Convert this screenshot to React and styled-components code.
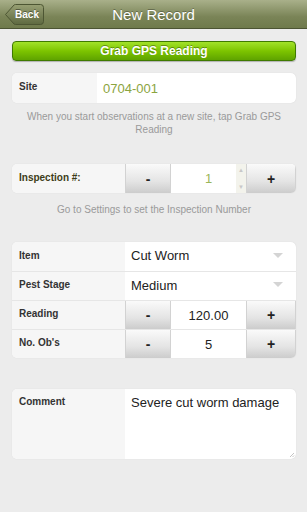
import React from 'react'
import styled, { createGlobalStyle } from 'styled-components'

const GlobalStyle = createGlobalStyle`
    html, body {
        margin: 0;
        padding: 0;
        background: #ececec;
        font-family: 'Liberation Sans', Arial, sans-serif;
    }
`

const Page = styled.div`
    width: 307px;
    height: 512px;
    background: #ececec;
    overflow: hidden;
`

const Header = styled.div`
    position: relative;
    height: 29px;
    display: flex;
    align-items: center;
    justify-content: center;
    background: linear-gradient(#a9b08a, #7a8457 60%, #6f7a4c);
    border-bottom: 1px solid #4c5433;
    box-sizing: border-box;

    h1 {
        margin: 0;
        font-size: 15px;
        font-weight: 400;
        color: #fff;
        text-shadow: 0 -1px 0 rgba(0, 0, 0, 0.3);
    }
`

const BackButton = styled.div`
    position: absolute;
    left: 5px;
    top: 4px;
    height: 21px;
    width: 39px;
    display: flex;
    align-items: center;
    justify-content: center;
    padding-left: 5px;
    box-sizing: border-box;
    font-size: 10px;
    font-weight: 700;
    color: #fff;
    text-shadow: 0 -1px 0 rgba(0, 0, 0, 0.4);

    svg {
        position: absolute;
        left: 0;
        top: 0;
        z-index: 0;
    }

    span {
        position: relative;
    }
`

const Content = styled.div`
    padding: 12px 11px 0 12px;
    display: flex;
    flex-direction: column;
`

const GpsButton = styled.div`
    height: 20px;
    display: flex;
    align-items: center;
    justify-content: center;
    border: 1px solid #3f7a00;
    border-radius: 4px;
    background: linear-gradient(#a2e22a, #7dc400 50%, #5ea300);
    box-shadow: 0 1px 1px rgba(0, 0, 0, 0.25);
    font-size: 12px;
    font-weight: 700;
    color: #fff;
    text-shadow: 0 -1px 0 rgba(0, 0, 0, 0.35);
    box-sizing: border-box;
`

const Card = styled.div`
    margin-top: ${(p) => p.$top || 0}px;
    background: #fff;
    border-radius: 5px;
    box-shadow: 0 0 1px rgba(0, 0, 0, 0.15);
    overflow: hidden;
`

const Row = styled.div`
    display: grid;
    grid-template-columns: ${(p) => p.$labelWidth || 113}px 1fr;
    height: ${(p) => p.$height || 29}px;
    border-top: ${(p) => (p.$first ? 'none' : '1px solid #e6e6e6')};
    box-sizing: border-box;
`

const Label = styled.div`
    background: #f6f6f6;
    padding: ${(p) => (p.$top ? '7px' : '0')} 0 0 7px;
    display: flex;
    align-items: ${(p) => (p.$top ? 'flex-start' : 'center')};
    font-size: 10px;
    font-weight: 700;
    color: ${(p) => p.$color || '#333'};
    padding-bottom: ${(p) => (p.$top ? '0' : '3px')};
`

const Value = styled.div`
    display: flex;
    align-items: ${(p) => (p.$top ? 'flex-start' : 'center')};
    padding: ${(p) => (p.$top ? '5px' : '0')} 10px 0 6px;
    font-size: 13px;
    color: ${(p) => p.$color || '#222'};
    position: relative;
`

const Select = styled(Value)`
    justify-content: space-between;
    padding-bottom: 2px;

    svg {
        margin-right: 3px;
    }
`

const Stepper = styled.div`
    display: grid;
    grid-template-columns: 46px 1fr 50px;
`

const StepButton = styled.div`
    display: flex;
    align-items: center;
    justify-content: center;
    background: linear-gradient(#fafafa, #e4e4e4 60%, #cccccc);
    border-left: 1px solid #d2d2d2;
    border-right: 1px solid #d2d2d2;
    font-size: 14px;
    font-weight: 700;
    color: #222;
`

const StepValue = styled.div`
    display: flex;
    align-items: center;
    justify-content: center;
    font-size: 13px;
    color: ${(p) => p.$color || '#222'};
    position: relative;
`

const Spinner = styled.div`
    position: absolute;
    right: 0;
    top: 0;
    bottom: 0;
    width: 10px;
    background: #f3f3ec;
    display: flex;
    flex-direction: column;
    justify-content: space-between;
    align-items: center;
    padding: 3px 0;
    box-sizing: border-box;
    font-size: 6px;
    color: #c8c8c8;
`

const Hint = styled.div`
    margin-top: ${(p) => p.$top || 8}px;
    padding: 0 14px;
    text-align: center;
    font-size: 10px;
    line-height: 13px;
    color: #9a9a9a;
`

const CommentValue = styled.div`
    padding: 6px 6px 0 6px;
    font-size: 13px;
    color: #222;
    position: relative;

    svg {
        position: absolute;
        right: 1px;
        bottom: 1px;
    }
`

const Arrow = () => (
    <svg width="10" height="6" viewBox="0 0 10 6">
        <path d="M0 0 H10 L5 5 Z" fill="#d4d4d4" />
    </svg>
)

const Stepped = ({ value, color, spin }) => (
    <Stepper>
        <StepButton>-</StepButton>
        <StepValue $color={color}>
            {value}
            {spin && (
                <Spinner>
                    <span>▲</span>
                    <span>▼</span>
                </Spinner>
            )}
        </StepValue>
        <StepButton>+</StepButton>
    </Stepper>
)

const App = () => {
    return (
        <Page>
            <GlobalStyle />
            <Header>
                <BackButton>
                    <svg width="39" height="21" viewBox="0 0 39 21">
                        <defs>
                            <linearGradient id="bk" x1="0" y1="0" x2="0" y2="1">
                                <stop offset="0" stopColor="#98a074" />
                                <stop offset="1" stopColor="#5e6940" />
                            </linearGradient>
                        </defs>
                        <path
                            d="M0.5 10.5 L9 1 Q9.5 0.5 10.5 0.5 H35.5 Q38.5 0.5 38.5 3.5 V17.5 Q38.5 20.5 35.5 20.5 H10.5 Q9.5 20.5 9 20 Z"
                            fill="url(#bk)"
                            stroke="#4d5633"
                        />
                    </svg>
                    <span>Back</span>
                </BackButton>
                <h1>New Record</h1>
            </Header>
            <Content>
                <GpsButton>Grab GPS Reading</GpsButton>

                <Card $top={12}>
                    <Row $first $labelWidth={85} $height={30}>
                        <Label>Site</Label>
                        <Value $color="#8ba43e">0704-001</Value>
                    </Row>
                </Card>
                <Hint $top={7}>When you start observations at a new site, tap Grab GPS Reading</Hint>

                <Card $top={28}>
                    <Row $first $height={29}>
                        <Label $color="#3d3d18">Inspection #:</Label>
                        <Stepped value="1" color="#9ab65a" spin />
                    </Row>
                </Card>
                <Hint $top={10}>Go to Settings to set the Inspection Number</Hint>

                <Card $top={26}>
                    <Row $first>
                        <Label>Item</Label>
                        <Select>
                            Cut Worm
                            <Arrow />
                        </Select>
                    </Row>
                    <Row>
                        <Label>Pest Stage</Label>
                        <Select>
                            Medium
                            <Arrow />
                        </Select>
                    </Row>
                    <Row>
                        <Label>Reading</Label>
                        <Stepped value="120.00" />
                    </Row>
                    <Row>
                        <Label>No. Ob's</Label>
                        <Stepped value="5" />
                    </Row>
                </Card>

                <Card $top={31}>
                    <Row $first $height={70}>
                        <Label $top>Comment</Label>
                        <CommentValue>
                            Severe cut worm damage
                            <svg width="6" height="6" viewBox="0 0 6 6">
                                <path d="M1 5 L5 1 M3.5 5 L5 3.5" stroke="#b5b5b5" strokeWidth="0.8" />
                            </svg>
                        </CommentValue>
                    </Row>
                </Card>
            </Content>
        </Page>
    )
}

export default App
